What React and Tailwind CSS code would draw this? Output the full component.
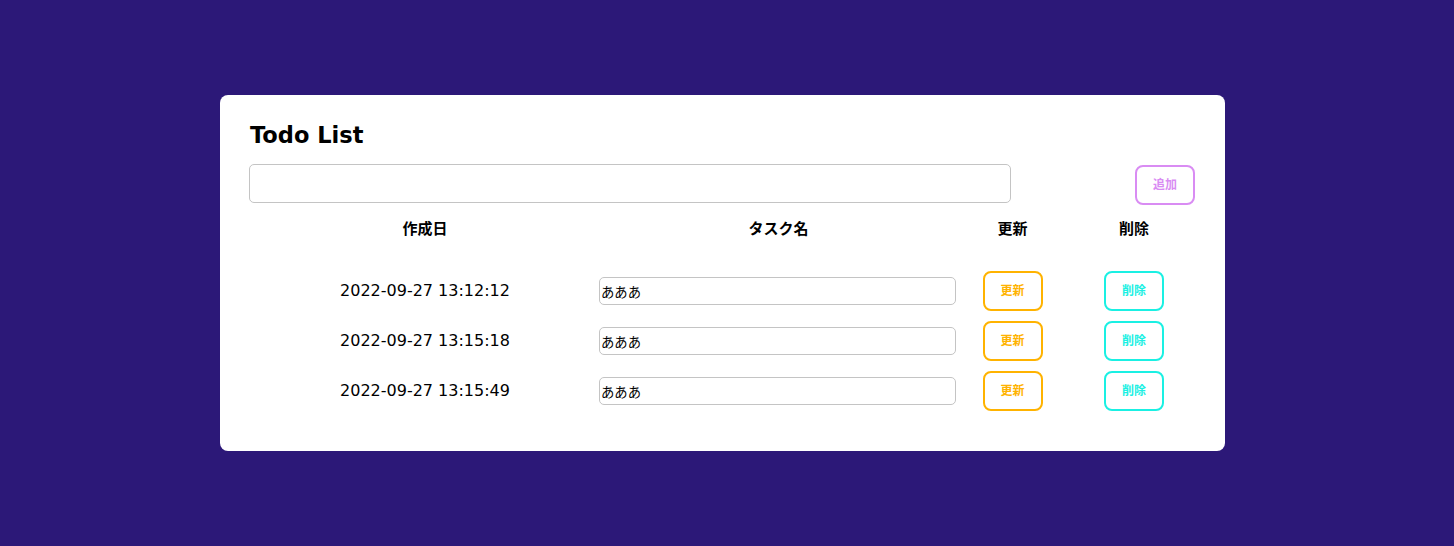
import { useState } from "react";

const initialTodos = [
    { id: 1, createdAt: "2022-09-27 13:12:12", title: "あああ" },
    { id: 2, createdAt: "2022-09-27 13:15:18", title: "あああ" },
    { id: 3, createdAt: "2022-09-27 13:15:49", title: "あああ" },
];

const cols = "grid grid-cols-[350px_357px_111px_127px]";

export default function App() {
    const [todos, setTodos] = useState(initialTodos);
    const [newTitle, setNewTitle] = useState("");

    const updateTitle = (id, value) => {
        setTodos(todos.map((t) => (t.id === id ? { ...t, title: value } : t)));
    };

    return (
        <div
            className="min-h-[546px] bg-[#2c1878] pt-[95px] text-black"
            style={{ fontFamily: '"DejaVu Sans", "Noto Sans CJK JP", sans-serif' }}
        >
            <div className="ml-[220px] w-[1005px] rounded-lg bg-white px-[30px] pt-[24px] pb-[35px]">
                <h1 className="text-[22.5px] font-bold leading-8">Todo List</h1>
                <div className="mt-[13px] flex items-start justify-between">
                    <input
                        value={newTitle}
                        onChange={(e) => setNewTitle(e.target.value)}
                        className="h-[39px] w-[762px] -ml-px rounded-[5px] border border-[#c4c4c4] px-2 text-[13px] outline-none"
                    />
                    <button className="mt-px h-10 w-[60px] rounded-lg border-2 border-[#d98cf3] text-xs font-bold text-[#d98cf3]">
                        追加
                    </button>
                </div>
                <div className={`${cols} mt-[12px] text-center text-[15px] font-bold leading-6`}>
                    <div>作成日</div>
                    <div>タスク名</div>
                    <div>更新</div>
                    <div className="pl-[5px]">削除</div>
                </div>
                <div className="mt-[25px]">
                    {todos.map((todo) => (
                        <div key={todo.id} className={`${cols} h-[50px] items-center text-center`}>
                            <div className="text-base">{todo.createdAt}</div>
                            <div>
                                <input
                                    value={todo.title}
                                    onChange={(e) => updateTitle(todo.id, e.target.value)}
                                    className="-ml-px block h-[28px] w-[357px] rounded-[5px] border border-[#c4c4c4] px-px text-[13.33px] outline-none"
                                />
                            </div>
                            <div className="flex justify-center">
                                <button className="h-10 w-[60px] rounded-lg border-2 border-[#ffb300] text-xs font-bold text-[#ffb300]">
                                    更新
                                </button>
                            </div>
                            <div className="flex justify-center pl-[5px]">
                                <button
                                    onClick={() => setTodos(todos.filter((t) => t.id !== todo.id))}
                                    className="h-10 w-[60px] rounded-lg border-2 border-[#1af0e3] text-xs font-bold text-[#1af0e3]"
                                >
                                    削除
                                </button>
                            </div>
                        </div>
                    ))}
                </div>
            </div>
        </div>
    );
}
